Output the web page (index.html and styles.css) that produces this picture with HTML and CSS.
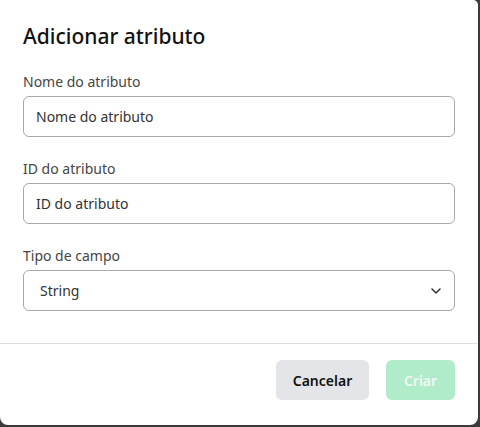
FILE: index.html
```html
<!DOCTYPE html>
<html lang="pt">
<head>
<meta charset="utf-8">
<link rel="stylesheet" href="styles.css">
</head>
<body>
<div class="dialog">
  <div class="body">
    <h2 class="title">Adicionar atributo</h2>
    <div class="field">
      <label class="label">Nome do atributo</label>
      <div class="input">Nome do atributo</div>
    </div>
    <div class="field">
      <label class="label">ID do atributo</label>
      <div class="input">ID do atributo</div>
    </div>
    <div class="field">
      <label class="label">Tipo de campo</label>
      <div class="input select">
        <span class="select-value">String</span>
        <svg class="chev" width="10" height="6" viewBox="0 0 10 6"><path d="M1 1l4 4 4-4" fill="none" stroke="#333" stroke-width="1.5" stroke-linecap="round" stroke-linejoin="round"/></svg>
      </div>
    </div>
  </div>
  <div class="footer">
    <button class="btn btn-cancel">Cancelar</button>
    <button class="btn btn-create">Criar</button>
  </div>
</div>
</body>
</html>
```
FILE: styles.css
```css
html, body {
  margin: 0;
  padding: 0;
}
body {
  background: #3b3b3b;
  width: 480px;
  height: 427px;
  overflow: hidden;
  font-family: "Noto Sans", "Open Sans", sans-serif;
}
.dialog {
  width: 478px;
  height: 425px;
  background: #fff;
  border-radius: 0 5px 8px 8px;
  display: flex;
  flex-direction: column;
}
.body {
  padding: 22px 23px 32px 23px;
  display: flex;
  flex-direction: column;
  gap: 22px;
  border-bottom: 1px solid #dddddd;
}
.title {
  margin: 0;
  font-size: 21px;
  line-height: 28px;
  font-weight: 500;
  color: #111;
}
.field {
  display: flex;
  flex-direction: column;
  gap: 4px;
}
.label {
  font-size: 14px;
  line-height: 20px;
  color: #444;
}
.input {
  height: 41px;
  box-sizing: border-box;
  border: 1px solid #a8a8a8;
  border-radius: 6px;
  padding: 0 12px;
  display: flex;
  align-items: center;
  font-size: 14px;
  font-weight: 400;
  color: #333;
}
.select {
  justify-content: space-between;
  padding: 0 13px 0 16px;
}
.footer {
  display: flex;
  justify-content: flex-end;
  gap: 17px;
  padding: 16px 23px 0 0;
}
.btn {
  height: 40px;
  border: none;
  border-radius: 6px;
  font-family: inherit;
  font-size: 14px;
  font-weight: 600;
  padding: 0;
}
.btn-cancel {
  width: 93px;
  background: #e4e5e8;
  color: #111;
}
.btn-create {
  width: 69px;
  background: #b1ecca;
  color: #eefaf3;
}
```
